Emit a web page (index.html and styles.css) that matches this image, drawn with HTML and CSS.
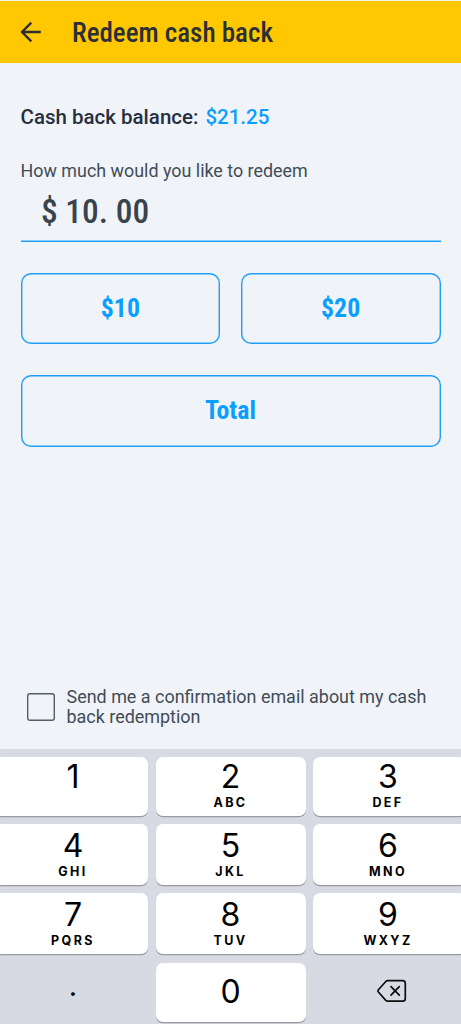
FILE: index.html
```html
<!DOCTYPE html>
<html lang="en">
<head>
<meta charset="utf-8">
<title>Redeem cash back</title>
<link rel="stylesheet" href="styles.css">
</head>
<body>
<div class="screen">
  <header class="header">
    <svg class="back" viewBox="0 0 22 22"><path d="M20.8 11H2.2M11.3 1.7L2 11L11.3 20.3"/></svg>
    <h1 class="title condensed">Redeem cash back</h1>
  </header>
  <main class="content">
    <p class="balance"><span class="balance-label">Cash back balance:</span><span class="balance-value">$21.25</span></p>
    <p class="label"><span>How much would you like to redeem</span></p>
    <div class="amount"><span class="condensed">$ 10. 00</span></div>
    <div class="choices">
      <button class="choice condensed"><span>$10</span></button>
      <button class="choice condensed"><span>$20</span></button>
      <button class="choice total condensed"><span>Total</span></button>
    </div>
    <label class="confirm"><span class="box"></span><span class="confirm-text">Send me a confirmation email about my cash<br>back redemption</span></label>
  </main>
  <section class="keyboard">
    <div class="key left top"><b>1</b></div>
    <div class="key top"><b>2</b><i>ABC</i></div>
    <div class="key right top"><b>3</b><i>DEF</i></div>
    <div class="key left"><b>4</b><i>GHI</i></div>
    <div class="key"><b>5</b><i>JKL</i></div>
    <div class="key right"><b>6</b><i>MNO</i></div>
    <div class="key left"><b>7</b><i>PQRS</i></div>
    <div class="key"><b>8</b><i>TUV</i></div>
    <div class="key right"><b>9</b><i>WXYZ</i></div>
    <div class="key plain left"><b class="dot">.</b></div>
    <div class="key zero"><b>0</b></div>
    <div class="key plain"><svg class="erase" viewBox="0 0 30 24"><path d="M10.7 1.7H25.6Q28.3 1.7 28.3 4.4V19.4Q28.3 22.1 25.6 22.1H10.7Q9.6 22.1 8.8 21.3L1.4 13Q.5 11.9 1.4 10.8L8.8 2.5Q9.6 1.7 10.7 1.7Z"/><path d="M14 7.7L22.3 16.1M22.3 7.7L14 16.1"/></svg></div>
  </section>
</div>
</body>
</html>
```
FILE: styles.css
```css
* { box-sizing: border-box; }
body { margin: 0; background: #f0f4f9; font-family: Roboto, sans-serif; }
h1, p { margin: 0; }
.screen { width: 461px; height: 1024px; overflow: hidden; display: flex; flex-direction: column; background: #f0f4f9; }
.condensed { font-family: "Roboto Condensed", Roboto, sans-serif; font-stretch: 75%; }
.header { height: 63px; flex: none; border-top: 1px solid #f0f4f9; background: #ffc800; display: flex; align-items: center; padding-left: 20px; }
.back { width: 22px; height: 22px; fill: none; stroke: #2b2f33; stroke-width: 2.4; }
.title { margin-left: 30px; padding-top: 1px; font-size: 27px; font-weight: 530; line-height: 32px; color: #2b2f36; white-space: nowrap; }
.content { flex: 1; display: flex; flex-direction: column; padding: 42px 20.5px 0; }
.balance { height: 24px; line-height: 24px; font-size: 20.5px; font-weight: 500; color: #272f3f; white-space: nowrap; }
.balance-value { color: #0a9eff; margin-left: 7px; }
.label { margin-top: 31px; height: 22px; line-height: 22px; font-size: 17.9px; color: #414c57; white-space: nowrap; }
.amount { height: 59.7px; padding-left: 20.5px; box-shadow: inset 0 -1.5px 0 #1e9ef5; font-size: 33.4px; line-height: 59px; font-weight: 500; color: #39434e; white-space: pre; }
.choices { margin-top: 31px; display: grid; grid-template-columns: 1fr 1fr; grid-template-rows: 71.5px 71.5px; gap: 31px 20.5px; }
.choice { padding: 0 0 1.5px; border: 0; box-shadow: inset 0 0 0 1.4px #1e9ef5; border-radius: 10px; background: none; color: #0a9eff; font-size: 25.8px; font-weight: 700; }
.total { grid-column: span 2; }
.confirm { margin: auto 0 21.3px 6.5px; display: flex; align-items: center; }
.box { width: 27.5px; height: 27.5px; box-shadow: inset 0 0 0 1.4px #535e69; border-radius: 3px; }
.confirm-text { margin-left: 12px; font-size: 17.95px; line-height: 20.5px; color: #414c57; white-space: nowrap; }
.keyboard { flex: none; height: 275px; margin: 0 -5px; padding-top: 7.5px; background: #d7dae2; display: grid; grid-template-columns: 153px 150px 153px; grid-template-rows: 59px 60.5px 60.5px 59px; row-gap: 8.7px; column-gap: 7.5px; font-family: Inter, sans-serif; color: #000; }
.key { background: #fff; border-radius: 7px; box-shadow: 0 1.3px 0 #989ba1; display: flex; flex-direction: column; align-items: center; padding-top: 5px; }
.top { padding-top: 3px; }
.left { padding-left: 3px; }
.right { padding-right: 3px; }
.key b { font-weight: 400; font-size: 32px; line-height: 34px; }
.key i { font-style: normal; font-weight: 650; font-size: 12.5px; line-height: 17px; letter-spacing: 2.4px; }
.zero, .plain { justify-content: center; padding-top: 0; }
.plain { background: none; box-shadow: none; }
.key .dot { font-size: 29px; padding-bottom: 12px; }
.erase { width: 30px; height: 24px; margin: 0 0 2px 4px; fill: none; stroke: #0b0c0d; stroke-width: 1.7; stroke-linecap: round; }
```
